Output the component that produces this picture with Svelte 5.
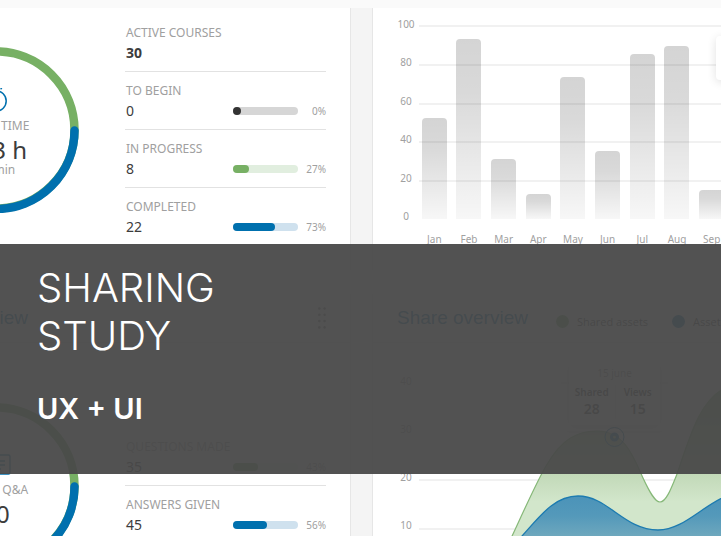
<script>
  const courses = [
    { label: 'ACTIVE COURSES', value: 30, strong: true },
    { label: 'TO BEGIN', value: 0, percent: 0, fill: 0, tone: 'dark' },
    { label: 'IN PROGRESS', value: 8, percent: 27, fill: 25, tone: 'green' },
    { label: 'COMPLETED', value: 22, percent: 73, fill: 65, tone: 'blue' }
  ];
  const questions = [
    { label: 'QUESTIONS MADE', value: 35, percent: 43, fill: 38, tone: 'green' },
    { label: 'ANSWERS GIVEN', value: 45, percent: 56, fill: 52, tone: 'blue' }
  ];
  const months = [
    { name: 'Jan', value: 52 },
    { name: 'Feb', value: 93 },
    { name: 'Mar', value: 31 },
    { name: 'Apr', value: 13 },
    { name: 'May', value: 73 },
    { name: 'Jun', value: 35 },
    { name: 'Jul', value: 85 },
    { name: 'Aug', value: 89 },
    { name: 'Sep', value: 15 }
  ];
</script>

{#snippet ring()}
  <svg class="ring" viewBox="0 0 166 166" aria-hidden="true">
    <circle cx="83" cy="83" r="78.5" fill="none" stroke="#77b064" stroke-width="8.5" />
    <path d="M161.5 83.5A78.5 78.5 0 0 1 4.5 83.5" fill="none" stroke="#0070ae" stroke-width="8.5" stroke-linecap="round" />
  </svg>
{/snippet}

{#snippet statList(items)}
  <ul class="stats">
    {#each items as item}
      <li>
        <span class="label">{item.label}</span>
        <div class="line">
          <span class="value" class:strong={item.strong}>{item.value}</span>
          {#if item.tone}
            <div class="track {item.tone}" role="progressbar" aria-label={item.label} aria-valuenow={item.percent}>
              <div class="fill" style="width: {item.fill}%"></div>
            </div>
            <span class="percent">{item.percent}%</span>
          {/if}
        </div>
      </li>
    {/each}
  </ul>
{/snippet}

{#snippet axis(ticks)}
  <div class="axis">
    {#each ticks as tick}<span>{tick}</span>{/each}
  </div>
{/snippet}

{#snippet gridLines(count)}
  <div class="lines">
    {#each Array(count) as _}<i></i>{/each}
  </div>
{/snippet}

<div class="page">
  <main>
    <section class="card left">
      <div class="body">
        <div class="donut">
          {@render ring()}
          <div class="center">
            <svg width="24" height="24" viewBox="0 0 24 24" fill="none" stroke="#0070ae" stroke-width="1.5" aria-hidden="true">
              <circle cx="12" cy="13" r="10.2" />
              <path d="M10 .8h4M12 .8v2M12 8v5l3 2M16.5 1.2l1.4-1" />
            </svg>
            <span class="caption">TOTAL TIME</span>
            <span class="total">123 h</span>
            <span class="caption unit">15 min</span>
          </div>
        </div>
        {@render statList(courses)}
      </div>
    </section>

    <section class="card right">
      <div class="chart">
        {@render axis([100, 80, 60, 40, 20, 0])}
        <div class="plot">
          {@render gridLines(5)}
          <div class="bars">
            {#each months as month}
              <div class="bar" style="height: {month.value}%"></div>
            {/each}
          </div>
        </div>
      </div>
      <div class="months">
        {#each months as month}<span>{month.name}</span>{/each}
      </div>
      <div class="bubble"></div>
    </section>

    <section class="card left">
      <header>
        <h2 class="cut">Q&amp;A overview</h2>
        <svg class="handle" width="8" height="22" viewBox="0 0 8 22" fill="#777" aria-hidden="true">
          {#each [1.5, 7.8, 14.1, 20.4] as y}
            <circle cx="1.3" cy={y} r="1.3" />
            <circle cx="6.6" cy={y} r="1.3" />
          {/each}
        </svg>
      </header>
      <div class="body second">
        <div class="donut">
          {@render ring()}
          <div class="center">
            <svg width="30" height="24" viewBox="0 0 30 24" fill="none" stroke="#0070ae" stroke-width="1.4" aria-hidden="true">
              <rect x="1" y="3" width="28" height="19" rx="1.5" />
              <path d="M6 9h18M6 13h18M6 17h14" />
            </svg>
            <span class="caption">TOTAL Q&amp;A</span>
            <span class="total">80</span>
          </div>
        </div>
        {@render statList(questions)}
      </div>
    </section>

    <section class="card right">
      <header>
        <h2>Share overview</h2>
        <div class="legend">
          <span class="key green">Shared assets</span>
          <span class="key blue">Asset views</span>
        </div>
      </header>
      <div class="chart second">
        {@render axis([40, 30, 20, 10, 0])}
        <div class="plot">
          {@render gridLines(4)}
          <svg class="areas" width="415" height="194" viewBox="417 382 415 194" aria-hidden="true">
            <defs>
              <linearGradient id="shared" gradientUnits="userSpaceOnUse" x1="0" y1="390" x2="0" y2="502">
                <stop offset="0" stop-color="#8fbf80" />
                <stop offset=".75" stop-color="#c2d9b8" />
                <stop offset="1" stop-color="#d2e6cb" />
              </linearGradient>
              <linearGradient id="views" gradientUnits="userSpaceOnUse" x1="0" y1="496" x2="0" y2="576">
                <stop offset="0" stop-color="#4b93b9" />
                <stop offset=".25" stop-color="#5499ba" />
                <stop offset="1" stop-color="#a0c4c4" />
              </linearGradient>
            </defs>
            <path
              d="M493 576C514 534 532 490 546 466C562 438 578 431 597 431C625 431 634 458 643 478C650 493 655 502 660 502C666 502 671 489 677 474C690 436 700 400 725 388C760 370 790 440 832 470V576Z"
              fill="url(#shared)" stroke="#86b878" stroke-width="1.2" />
            <path
              d="M484 570C528 542 542 496 578 496C608 496 624 530 658 530C682 530 700 508 724 497C760 480 800 520 832 530V576H484Z"
              fill="url(#views)" stroke="#1d7bb0" stroke-width="1.3" />
            <circle cx="614.5" cy="437" r="9.5" fill="none" stroke="#0070ae" stroke-width="1" />
            <circle cx="614.5" cy="437" r="3" fill="none" stroke="#0070ae" stroke-width="3" />
          </svg>
          <div class="tooltip">
            <span class="date">15 june</span>
            <div class="pair">
              <div><span>Shared</span><b>28</b></div>
              <div><span>Views</span><b>15</b></div>
            </div>
          </div>
        </div>
      </div>
    </section>
  </main>

  <div class="banner">
    <h1>SHARING<br />STUDY</h1>
    <p>UX + UI</p>
  </div>
</div>

<style>
  :global(body) {
    margin: 0;
  }
  .page {
    position: relative;
    height: 100vh;
    overflow: hidden;
    background: #f4f4f4;
    color: #3c3c3c;
    font-family: 'Noto Sans', 'Open Sans', sans-serif;
    font-size: 12px;
  }
  main {
    display: grid;
    grid-template-columns: 351px minmax(0, 1fr);
    grid-template-rows: 262px auto;
    gap: 24px 21px;
    border-top: 8px solid #fafafa;
  }
  .card {
    position: relative;
    box-sizing: border-box;
    min-width: 0;
    background: #fff;
    border: 0 solid #e6e6e6;
    overflow: hidden;
  }
  .left {
    border-right-width: 1px;
  }
  .right {
    border-left-width: 1px;
  }
  header {
    display: flex;
    align-items: center;
    height: 48px;
    padding: 0 24px;
    border-bottom: 1px solid #ececec;
  }
  .left header {
    justify-content: space-between;
    padding-left: 0;
  }
  h2 {
    margin: 0;
    color: #0070ae;
    font: 400 19px/24px 'Liberation Sans', Arial, sans-serif;
    white-space: nowrap;
  }
  .cut {
    display: flex;
    justify-content: flex-end;
    width: 28px;
  }
  .body {
    display: flex;
    align-items: flex-start;
    gap: 46px;
    padding: 6px 24px 0 0;
  }
  .body.second {
    padding-top: 85px;
  }
  .donut {
    display: grid;
    flex: none;
    width: 166px;
    height: 166px;
    margin: 33px 0 0 -87px;
  }
  .second .donut {
    margin-top: -25px;
  }
  .ring,
  .center {
    grid-area: 1 / 1;
  }
  .center {
    display: flex;
    flex-direction: column;
    align-items: center;
    justify-content: center;
    padding-top: 6px;
  }
  .caption {
    margin-top: 6px;
    color: #a0a0a0;
    line-height: 16px;
  }
  .total {
    margin-top: 4px;
    font-size: 24px;
    line-height: 24px;
  }
  .unit {
    margin-top: 0;
  }
  .stats {
    flex: 1;
    margin: 0;
    padding: 0;
    list-style: none;
  }
  li {
    padding: 10px 0 8px 1px;
  }
  li + li {
    border-top: 1px solid #e2e2e2;
  }
  .label {
    display: block;
    color: #a0a0a0;
    font-size: 12px;
    line-height: 18px;
  }
  .line {
    display: flex;
    align-items: center;
    height: 21px;
  }
  .value {
    flex: 1;
    font-size: 14px;
    line-height: 20px;
  }
  .strong {
    font-weight: 700;
  }
  .track {
    width: 65px;
    height: 8px;
    border-radius: 4px;
  }
  .fill {
    min-width: 8px;
    height: 8px;
    border-radius: 4px;
  }
  .track.dark {
    background: #d6d6d6;
  }
  .track.green {
    background: #e1eedf;
  }
  .track.blue {
    background: #cfe1ee;
  }
  .dark .fill {
    background: #333;
  }
  .green .fill {
    background: #77b064;
  }
  .blue .fill {
    background: #0070ae;
  }
  .percent {
    width: 28px;
    color: #a0a0a0;
    font-size: 10px;
    text-align: right;
  }
  .chart {
    display: flex;
    padding: 8px 0 0 22px;
  }
  .chart.second {
    padding-top: 30px;
  }
  .axis {
    display: flex;
    flex: none;
    flex-direction: column;
    align-items: center;
    justify-content: space-between;
    width: 22px;
    height: 208px;
    color: #a0a0a0;
    font-size: 10px;
    line-height: 16px;
  }
  .plot {
    position: relative;
    display: grid;
    flex: 1;
    grid-template-columns: minmax(0, 1fr);
    height: 194px;
    margin-top: 9px;
    min-width: 0;
  }
  .lines,
  .bars,
  .areas {
    grid-area: 1 / 1;
  }
  .lines {
    display: flex;
    flex-direction: column;
    margin-left: 2px;
  }
  .lines i {
    box-sizing: border-box;
    flex: 1;
    border-top: 2px solid #f1f1f1;
  }
  .bars,
  .months {
    display: grid;
    grid-template-columns: repeat(9, 1fr);
    width: 312px;
  }
  .bars {
    align-items: end;
    justify-items: center;
  }
  .bar {
    width: 25px;
    border-radius: 4px 4px 0 0;
    background: linear-gradient(rgba(0, 0, 0, 0.17), rgba(0, 0, 0, 0.15) 30%, rgba(0, 0, 0, 0.03));
  }
  .months {
    margin: 7px 0 0 44px;
    color: #a0a0a0;
    font-size: 10px;
    line-height: 16px;
    text-align: center;
  }
  .bubble {
    position: absolute;
    top: 28px;
    left: 343px;
    width: 90px;
    height: 44px;
    border-radius: 4px;
    background: #fff;
    box-shadow: 0 2px 10px rgba(0, 0, 0, 0.12);
  }
  .legend {
    display: flex;
    gap: 24px;
    margin: 6px 0 0 28px;
    white-space: nowrap;
    font-family: 'Open Sans', sans-serif;
    font-size: 11px;
    font-weight: 500;
  }
  .key {
    display: flex;
    align-items: center;
    gap: 8px;
  }
  .key::before {
    content: '';
    width: 13px;
    height: 13px;
    border-radius: 50%;
  }
  .key.green::before {
    background: #77b064;
  }
  .key.blue::before {
    background: #0070ae;
  }
  .tooltip {
    position: absolute;
    top: -21px;
    left: 152px;
    width: 91px;
    height: 64px;
    border-radius: 4px;
    background: #fff;
    box-shadow: 0 2px 12px rgba(0, 0, 0, 0.2);
    text-align: center;
  }
  .date {
    display: block;
    padding-top: 4px;
    color: #888;
    font-size: 10px;
    line-height: 16px;
  }
  .pair {
    display: grid;
    grid-template-columns: 1fr 1fr;
    margin-top: 4px;
  }
  .pair div + div {
    border-left: 1px solid #e2e2e2;
  }
  .pair span,
  .pair b {
    display: block;
    font-size: 10px;
    font-weight: 600;
    line-height: 14px;
  }
  .pair b {
    font-size: 14px;
    line-height: 20px;
  }
  .banner {
    position: absolute;
    top: 244px;
    right: 0;
    left: 0;
    padding: 20px 37px 48px;
    background: rgba(73, 73, 73, 0.95);
    color: #fff;
    font-family: Inter, sans-serif;
    font-optical-sizing: none;
  }
  h1 {
    margin: 0;
    font-size: 40px;
    font-weight: 300;
    line-height: 48px;
  }
  p {
    margin: 32px 0 0;
    font-size: 29px;
    font-weight: 600;
    line-height: 34px;
  }
</style>
